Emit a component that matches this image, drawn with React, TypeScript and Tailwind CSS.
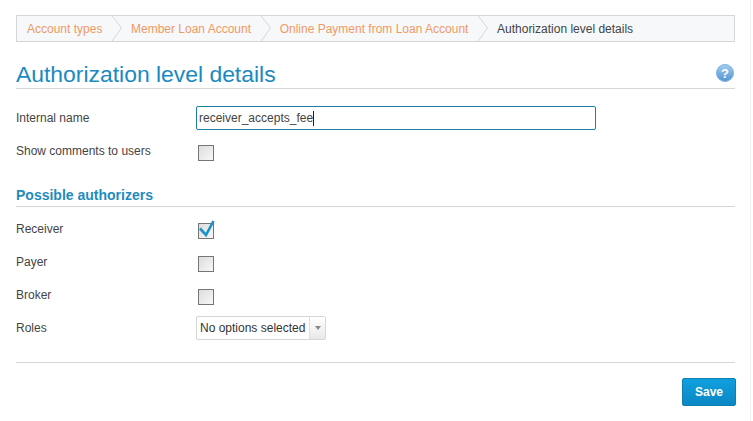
import { ReactNode } from "react";

function Crumb({ label, last }: { label: string; last?: boolean }) {
  return (
    <div className={last ? "flex items-center pl-[7px] text-[#444444]" : "flex items-center text-[#f09a63]"}>
      <span className={last ? "" : "pl-[7px] pr-[9px]"}>{label}</span>
      {!last && (
        <svg width="12.6" height="27" viewBox="0 0 12.6 27" className="shrink-0" fill="none">
          <path d="M0.5 0 L10.5 13 L0.5 27" stroke="#d3d7da" strokeWidth="1" />
        </svg>
      )}
    </div>
  );
}

function Row({ label, className, children }: { label: string; className: string; children: ReactNode }) {
  return (
    <div className={`flex items-center ${className}`}>
      <div className="w-[180px] shrink-0 text-[12px] text-[#444444]">{label}</div>
      {children}
    </div>
  );
}

function Checkbox({ checked }: { checked?: boolean }) {
  return (
    <div className="relative top-[2px] ml-[2px] h-[16px] w-[16px] border border-[#767676] bg-gradient-to-br from-[#dcdcdc] to-[#f8f8f8]">
      {checked && (
        <svg width="20" height="20" viewBox="0 0 20 20" className="absolute left-[-1px] top-[-6px]" fill="none">
          <path d="M2 10.5 L8 17 L15.5 3" stroke="#1b93c4" strokeWidth="2.6" />
        </svg>
      )}
    </div>
  );
}

export default function App() {
  return (
    <div className="h-[421px] w-[753px] overflow-hidden bg-white font-['Liberation_Sans',sans-serif]">
      <div className="h-[421px] w-[751px] border-r border-[#f0f0f0] pl-[16px] pr-[16px] pt-[15px]">
        <nav className="flex h-[27px] w-[719px] items-center border border-[#d3d7da] bg-[#f7f8fa] pl-[3px] text-[12px] leading-none">
          <Crumb label="Account types" />
          <Crumb label="Member Loan Account" />
          <Crumb label="Online Payment from Loan Account" />
          <Crumb label="Authorization level details" last />
        </nav>

        <div className="mt-[18px] flex h-[29px] w-[719px] items-center justify-between border-b border-[#d6d6d6] pb-[1px]">
          <h1 className="text-[22.9px] leading-[28px] font-normal text-[#1a8ac0]">Authorization level details</h1>
          <svg width="20" height="20" viewBox="0 0 20 20" className="relative top-[-1px]">
            <defs>
              <linearGradient id="help" x1="0" y1="0" x2="0" y2="1">
                <stop offset="0" stopColor="#a5cdf0" />
                <stop offset="1" stopColor="#4f94d4" />
              </linearGradient>
            </defs>
            <circle cx="10" cy="10" r="8.5" fill="url(#help)" stroke="#7fb2e0" strokeWidth="1" />
            <text x="10" y="14.5" textAnchor="middle" fontSize="13" fontWeight="700" fill="#ffffff" fontFamily="Liberation Sans">?</text>
          </svg>
        </div>

        <Row label="Internal name" className="mt-[17px] h-[24px]">
          <div className="flex h-[24px] w-[400px] items-center rounded-[2px] border border-[#1a7fa0] bg-white pl-[2px] text-[12px] text-[#444444]">
            receiver_accepts_fee
            <span className="h-[15px] w-px bg-[#222222]" />
          </div>
        </Row>

        <Row label="Show comments to users" className="mt-[9px] h-[24px]">
          <Checkbox />
        </Row>

        <h2 className="mt-[23px] h-[21px] w-[719px] border-b border-[#d6d6d6] text-[14px] leading-[18px] font-bold text-[#1f8bbd]">
          Possible authorizers
        </h2>

        <Row label="Receiver" className="mt-[10px] h-[24px]">
          <Checkbox checked />
        </Row>
        <Row label="Payer" className="mt-[9px] h-[24px]">
          <Checkbox />
        </Row>
        <Row label="Broker" className="mt-[9px] h-[24px]">
          <Checkbox />
        </Row>
        <Row label="Roles" className="mt-[9px] h-[24px]">
          <div className="flex h-[24px] w-[130px] items-center rounded-[2px] border border-[#d6d6d6] bg-white text-[12px] text-[#333333]">
            <span className="w-[112px] shrink-0 pl-[3px] whitespace-nowrap">No options selected</span>
            <div className="flex h-full flex-1 items-center justify-center border-l border-[#e0e0e0] bg-gradient-to-b from-white to-[#e8e8e8]">
              <span className="h-0 w-0 border-x-[3.5px] border-t-[4px] border-x-transparent border-t-[#888888]" />
            </div>
          </div>
        </Row>

        <div className="mt-[22px] h-px w-[719px] bg-[#d6d6d6]" />

        <div className="mt-[15px] flex w-[720px] justify-end">
          <button className="h-[28px] w-[54px] rounded-[2px] border border-[#0d7fb3] bg-gradient-to-b from-[#0fa0de] to-[#0b87c4] text-[12px] font-bold text-white">
            Save
          </button>
        </div>
      </div>
    </div>
  );
}
